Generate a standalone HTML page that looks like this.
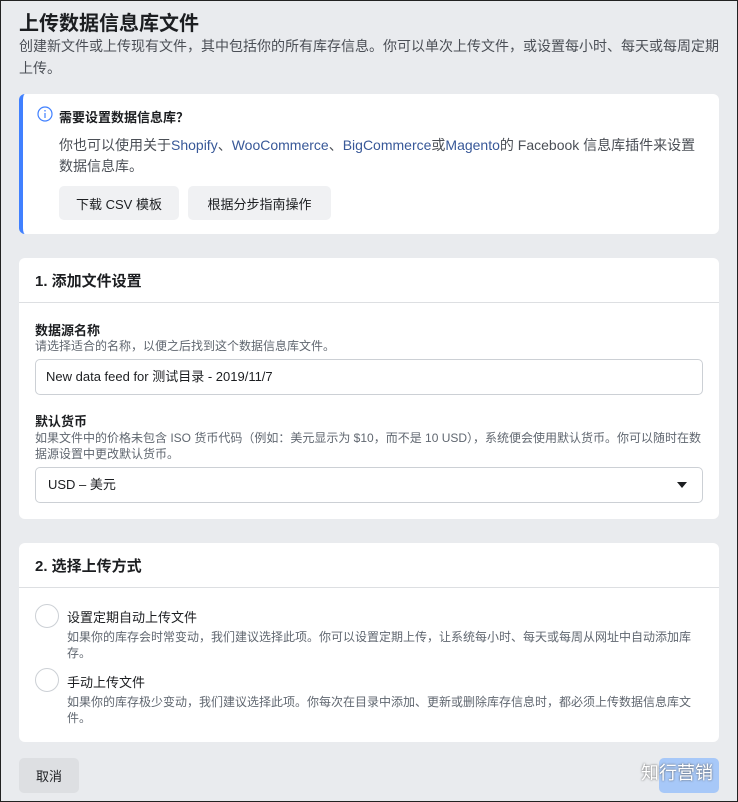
<!DOCTYPE html>
<html><head><meta charset="utf-8"><style>
*{box-sizing:border-box;margin:0;padding:0}
body{width:738px;height:802px;background:#e9ebee;font-family:"Liberation Sans","Noto Sans CJK SC",sans-serif;color:#1c1e21;position:relative;overflow:hidden;border:1px solid #222}
.abs{position:absolute}
.card{position:absolute;left:18px;width:700px;background:#fff;border-radius:6px}
.h{font-size:15px;font-weight:bold}
.s{font-size:12px;color:#606770;line-height:16px}
.btn{position:absolute;background:#f0f1f3;border-radius:5px;font-size:13px;display:flex;align-items:center;justify-content:center}
a{color:#385898;text-decoration:none}
.radio{position:absolute;width:24px;height:24px;border:1px solid #ccd0d5;border-radius:50%;left:16px}
</style></head><body>
<div class="abs" style="left:18px;top:6px;font-size:20px;font-weight:bold">上传数据信息库文件</div>
<div class="abs" style="left:18px;top:34px;width:700px;font-size:14px;line-height:22px;color:#4b4f56">创建新文件或上传现有文件，其中包括你的所有库存信息。你可以单次上传文件，或设置每小时、每天或每周定期上传。</div>

<div class="card" style="top:93px;height:140px;border-left:4px solid #4080ff">
 <svg class="abs" style="left:14px;top:12px" width="16" height="16" viewBox="0 0 16 16"><circle cx="8" cy="8" r="7" fill="none" stroke="#4080ff" stroke-width="1.2"/><rect x="7.4" y="7" width="1.2" height="5" fill="#4080ff"/><circle cx="8" cy="4.8" r=".8" fill="#4080ff"/></svg>
 <div class="abs" style="left:36px;top:13px;font-size:13px;font-weight:bold">需要设置数据信息库？</div>
 <div class="abs" style="left:36px;top:41px;width:645px;font-size:14px;line-height:21px;color:#4b4f56">你也可以使用关于<a>Shopify</a>、<a>WooCommerce</a>、<a>BigCommerce</a>或<a>Magento</a>的 Facebook 信息库插件来设置数据信息库。</div>
 <div class="btn" style="left:36px;top:92px;width:120px;height:34px">下载 CSV 模板</div>
 <div class="btn" style="left:165px;top:92px;width:143px;height:34px">根据分步指南操作</div>
</div>

<div class="card" style="top:257px;height:261px">
 <div class="abs h" style="left:16px;top:12px">1. 添加文件设置</div>
 <div class="abs" style="left:0;top:44px;width:700px;height:1px;background:#dddfe2"></div>
 <div class="abs" style="left:16px;top:62px;font-size:13px;font-weight:bold">数据源名称</div>
 <div class="abs s" style="left:16px;top:80px">请选择适合的名称，以便之后找到这个数据信息库文件。</div>
 <div class="abs" style="left:16px;top:101px;width:668px;height:36px;border:1px solid #ccd0d5;border-radius:5px;font-size:13px;line-height:34px;padding:0 10px">New data feed for 测试目录 - 2019/11/7</div>
 <div class="abs" style="left:16px;top:153px;font-size:13px;font-weight:bold">默认货币</div>
 <div class="abs s" style="left:16px;top:172px;width:674px">如果文件中的价格未包含 ISO 货币代码（例如：美元显示为 $10，而不是 10 USD），系统便会使用默认货币。你可以随时在数据源设置中更改默认货币。</div>
 <div class="abs" style="left:16px;top:209px;width:668px;height:36px;border:1px solid #ccd0d5;border-radius:5px;font-size:13px;line-height:34px;padding:0 12px">USD – 美元</div>
 <div class="abs" style="left:658px;top:224px;width:0;height:0;border-left:5px solid transparent;border-right:5px solid transparent;border-top:6px solid #1c1e21"></div>
</div>

<div class="card" style="top:542px;height:199px">
 <div class="abs h" style="left:16px;top:12px">2. 选择上传方式</div>
 <div class="abs" style="left:0;top:44px;width:700px;height:1px;background:#dddfe2"></div>
 <div class="radio" style="top:61px"></div>
 <div class="abs" style="left:48px;top:64px;font-size:13px">设置定期自动上传文件</div>
 <div class="abs s" style="left:48px;top:86px;width:640px">如果你的库存会时常变动，我们建议选择此项。你可以设置定期上传，让系统每小时、每天或每周从网址中自动添加库存。</div>
 <div class="radio" style="top:125px"></div>
 <div class="abs" style="left:48px;top:129px;font-size:13px">手动上传文件</div>
 <div class="abs s" style="left:48px;top:151px;width:640px">如果你的库存极少变动，我们建议选择此项。你每次在目录中添加、更新或删除库存信息时，都必须上传数据信息库文件。</div>
</div>

<div class="btn" style="left:18px;top:757px;width:60px;height:35px;background:#dddfe2">取消</div>
<div class="abs" style="left:658px;top:757px;width:60px;height:35px;background:#a7c8f8;border-radius:5px"></div>
<div class="abs" style="left:640px;top:758px;font-size:18px;color:#fff;text-shadow:0 0 2px #555">知行营销</div>
</body></html>
